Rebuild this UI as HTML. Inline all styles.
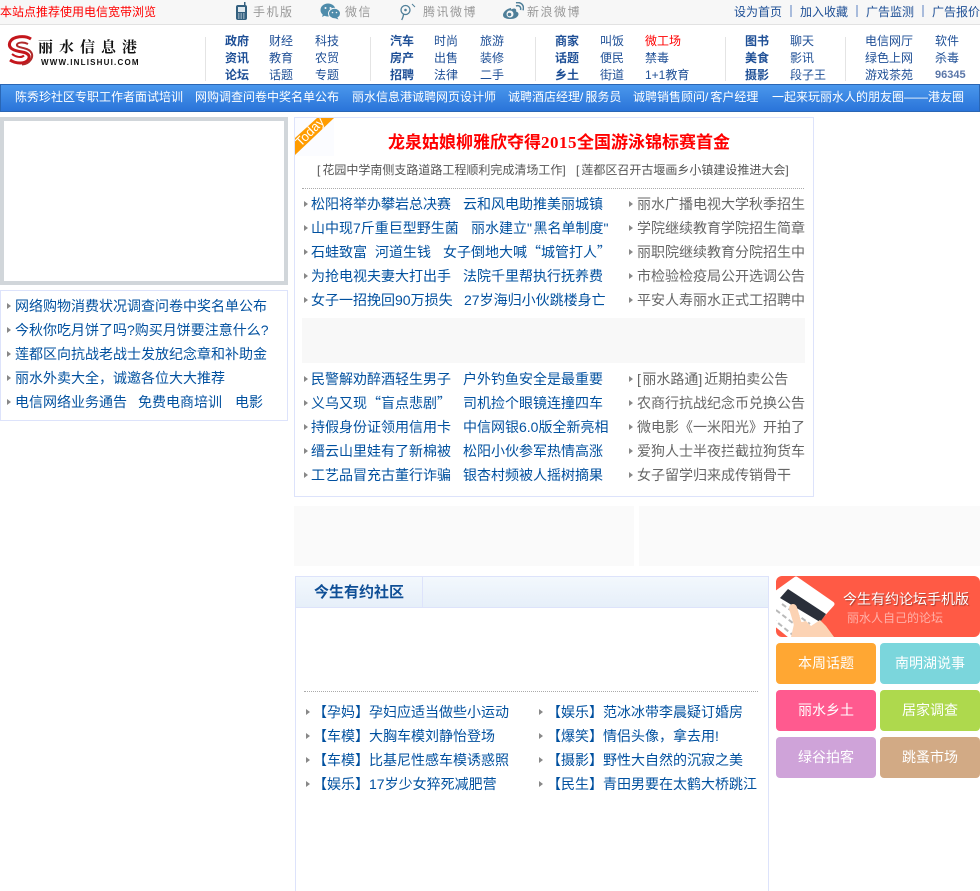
<!DOCTYPE html>
<html><head><meta charset="utf-8"><style>
html{margin:0;padding:0;background:#fff;width:980px;height:891px;overflow:hidden}
body{margin:0;padding:0;background:#fff;position:relative;width:980px;height:891px;overflow:hidden;font:12px/16px "WenQuanYi Zen Hei","Liberation Sans","Noto Sans CJK SC",sans-serif;color:#0b4f9e}
div,span,svg{position:absolute}
.t{white-space:nowrap}
.n,.b,.g,.k,.h,.w{position:absolute;white-space:nowrap}
.n{color:#1e4f96}
.k{color:#1e4f96;font-weight:bold}
.h{color:#999;font-size:12px;letter-spacing:1.5px;top:4px}
.w{color:#fff;top:89px}
.b{color:#00509f;font-size:14px;line-height:18px}
.g{color:#666;font-size:14px;line-height:18px}
.a{position:absolute;width:0;height:0;border-left:4px solid #888;border-top:3.5px solid transparent;border-bottom:3.5px solid transparent}
.s{background:#e4e4e4;width:1px;height:44px;top:37px}
.q{position:absolute;color:#fff;font-size:14px;line-height:41px;height:41px;width:100px;text-align:center;border-radius:4px;white-space:nowrap}
.p{top:4px;color:#1e4f96;position:absolute;white-space:nowrap}
.l{position:absolute;top:5px;width:2px;height:12px;background:#a9bcdc}
.c{position:static;font-family:"Noto Sans CJK SC",sans-serif}
.x{position:static;letter-spacing:2px}
.y{position:static;letter-spacing:1.5px}
</style></head><body>

<div style="left:0;top:0;width:980px;height:24px;background:#f7f7f7;border-bottom:1px solid #e2e2e2"></div>
<span class="t" style="left:0;top:4px;color:#f00">本站点推荐使用电信宽带浏览</span>

<svg style="left:235px;top:2px" width="13" height="19" viewBox="0 0 13 19"><rect x="1" y="3" width="11" height="15" rx="2" fill="#34607f"/><rect x="9" y="0" width="1.5" height="4" fill="#34607f"/><rect x="3" y="5" width="7" height="5" fill="#dfe8ee"/><path d="M3 12h7M3 14h7M3 16h7" stroke="#cfdde6" stroke-width="1" stroke-dasharray="1.5 1"/></svg>
<span class="h" style="left:253px">手机版</span>

<svg style="left:320px;top:3px" width="21" height="17" viewBox="0 0 21 17"><ellipse cx="8" cy="7" rx="7.5" ry="6.5" fill="#4f8cab"/><path d="M3 11l-1 3 4-2z" fill="#4f8cab"/><ellipse cx="14.5" cy="10.5" rx="6" ry="5.2" fill="#4f8cab" stroke="#f7f7f7"/><path d="M17 14l1.500 2.500-4-1.500z" fill="#4f8cab"/><circle cx="5.500" cy="5" r="1" fill="#f7f7f7"/><circle cx="10.500" cy="5" r="1" fill="#f7f7f7"/><circle cx="12.500" cy="9.500" r=".8" fill="#f7f7f7"/><circle cx="16.500" cy="9.500" r=".8" fill="#f7f7f7"/></svg>
<span class="h" style="left:345px">微信</span>

<svg style="left:399px;top:2px" width="18" height="19" viewBox="0 0 18 19"><circle cx="6.500" cy="8" r="4.500" fill="none" stroke="#4f7f99" stroke-width="1.300"/><circle cx="6.500" cy="8" r="1.300" fill="#4f7f99"/><path d="M4.500 12c0 2-.8 4-1.800 6" fill="none" stroke="#4f7f99" stroke-width="1.300"/><path d="M13 2l3 3" stroke="#4f7f99" stroke-width="1"/></svg>
<span class="h" style="left:423px">腾讯微博</span>

<svg style="left:502px;top:2px" width="22" height="18" viewBox="0 0 22 18"><path d="M9 6c-4 .5-8 4-8 7s3.500 4 7.500 4c5 0 8-2.500 8-5 0-1.500-1.500-2.300-2.500-2.500 .6-1.500 0-3-2-3-1 0-2 .5-3 1 .2-1 0-1.700 0-1.500z" fill="#4f7f99"/><circle cx="8" cy="12" r="3.500" fill="#f7f7f7"/><circle cx="7.500" cy="12.500" r="1.800" fill="#4f7f99"/><path d="M14 4c3-1.200 5.500 1 4.500 4M14 .8c5.500-1.200 8.500 3 7 7.500" fill="none" stroke="#4f7f99" stroke-width="1.500"/></svg>
<span class="h" style="left:527px">新浪微博</span>

<span class="p" style="left:734px">设为首页</span><div class="l" style="left:790px"></div>
<span class="p" style="left:800px">加入收藏</span><div class="l" style="left:856px"></div>
<span class="p" style="left:866px">广告监测</span><div class="l" style="left:922px"></div>
<span class="p" style="left:932px">广告报价</span>

<svg style="left:7px;top:35px" width="28" height="33" viewBox="0 0 28 33"><path d="M24 4C18 0 6 1 3 7c-3 7 6 9 12 10 6 1 9 4 6 8-3 4-12 4-18 0" fill="none" stroke="#c4161c" stroke-width="3"/><path d="M21 9c-4-2-10-2-11 .5-1 2.500 5 3 8 4 6 1.500 9 6 6 11-2 3-5 5-9 5" fill="none" stroke="#b02a2a" stroke-width="2"/><path d="M5 19c3 2.500 9 4.500 12 1.500" fill="none" stroke="#c4161c" stroke-width="2"/></svg>
<span class="t" style="left:38px;top:37px;font:bold 15px/20px 'Noto Serif CJK SC',serif;letter-spacing:6px;color:#111">丽水信息港</span>
<span class="t" style="left:41px;top:58px;font:bold 8px/10px 'Liberation Sans',sans-serif;letter-spacing:1.2px;color:#111">WWW.INLISHUI.COM</span>

<div class="s" style="left:205px"></div><div class="s" style="left:370px"></div><div class="s" style="left:535px"></div><div class="s" style="left:725px"></div><div class="s" style="left:845px"></div>

<span class="k" style="left:225px;top:33px">政府</span><span class="n" style="left:269px;top:33px">财经</span><span class="n" style="left:315px;top:33px">科技</span>
<span class="k" style="left:225px;top:50px">资讯</span><span class="n" style="left:269px;top:50px">教育</span><span class="n" style="left:315px;top:50px">农贸</span>
<span class="k" style="left:225px;top:67px">论坛</span><span class="n" style="left:269px;top:67px">话题</span><span class="n" style="left:315px;top:67px">专题</span>

<span class="k" style="left:390px;top:33px">汽车</span><span class="n" style="left:434px;top:33px">时尚</span><span class="n" style="left:480px;top:33px">旅游</span>
<span class="k" style="left:390px;top:50px">房产</span><span class="n" style="left:434px;top:50px">出售</span><span class="n" style="left:480px;top:50px">装修</span>
<span class="k" style="left:390px;top:67px">招聘</span><span class="n" style="left:434px;top:67px">法律</span><span class="n" style="left:480px;top:67px">二手</span>

<span class="k" style="left:555px;top:33px">商家</span><span class="n" style="left:600px;top:33px">叫饭</span><span class="n" style="left:645px;top:33px;color:#f00">微工场</span>
<span class="k" style="left:555px;top:50px">话题</span><span class="n" style="left:600px;top:50px">便民</span><span class="n" style="left:645px;top:50px">禁毒</span>
<span class="k" style="left:555px;top:67px">乡土</span><span class="n" style="left:600px;top:67px">街道</span><span class="n" style="left:645px;top:67px">1+1教育</span>

<span class="k" style="left:745px;top:33px">图书</span><span class="n" style="left:790px;top:33px">聊天</span>
<span class="k" style="left:745px;top:50px">美食</span><span class="n" style="left:790px;top:50px">影讯</span>
<span class="k" style="left:745px;top:67px">摄影</span><span class="n" style="left:790px;top:67px">段子王</span>

<span class="n" style="left:865px;top:33px">电信网厅</span><span class="n" style="left:935px;top:33px">软件</span>
<span class="n" style="left:865px;top:50px">绿色上网</span><span class="n" style="left:935px;top:50px">杀毒</span>
<span class="n" style="left:865px;top:67px">游戏茶苑</span><span class="n" style="left:935px;top:67px;color:#5a76a8;font-weight:bold;font-size:11px">96345</span>

<div style="left:0;top:84px;width:978px;height:26px;background:linear-gradient(#4a97ec,#2a74d9);border:1px solid #2a66b4"></div>
<span class="w" style="left:15px">陈秀珍社区专职工作者面试培训</span>
<span class="w" style="left:195px">网购调查问卷中奖名单公布</span>
<span class="w" style="left:352px">丽水信息港诚聘网页设计师</span>
<span class="w" style="left:508px">诚聘酒店经理<span class="x">/</span>服务员</span>
<span class="w" style="left:633px">诚聘销售顾问<span class="x">/</span>客户经理</span>
<span class="w" style="left:772px">一起来玩丽水人的朋友圈——港友圈</span>

<div style="left:0;top:117px;width:280px;height:160px;border:4px solid #d1d6da"></div>
<div style="left:0;top:290px;width:286px;height:129px;border:1px solid #dde3fb"></div>
<i class="a" style="left:7px;top:303px"></i><span class="b" style="left:15px;top:297px">网络购物消费状况调查问卷中奖名单公布</span>
<i class="a" style="left:7px;top:327px"></i><span class="b" style="left:15px;top:321px">今秋你吃月饼了吗?购买月饼要注意什么?</span>
<i class="a" style="left:7px;top:351px"></i><span class="b" style="left:15px;top:345px">莲都区向抗战老战士发放纪念章和补助金</span>
<i class="a" style="left:7px;top:375px"></i><span class="b" style="left:15px;top:369px">丽水外卖大全，诚邀各位大大推荐</span>
<i class="a" style="left:7px;top:399px"></i><span class="b" style="left:15px;top:393px">电信网络业务通告</span><span class="b" style="left:138px;top:393px">免费电商培训</span><span class="b" style="left:235px;top:393px">电影</span>

<div style="left:294px;top:117px;width:518px;height:378px;border:1px solid #dde3fb"></div>
<svg style="left:295px;top:118px" width="39" height="38"><rect width="39" height="38" fill="#fbfcff"/><polygon points="22,0 39,0 0,37 0,20" fill="#ff9c00"/><text x="15" y="18" transform="rotate(-45 15 14)" fill="#fff" font-size="13" font-family="Liberation Sans" text-anchor="middle">Today</text></svg>
<span class="t" style="left:388px;top:131px;font:bold 17px/20px 'WenQuanYi Zen Hei','Noto Sans CJK SC',sans-serif;color:#f00">龙泉姑娘柳雅欣夺得<span style="position:static;font-family:'Liberation Serif';letter-spacing:.5px">2015</span>全国游泳锦标赛首金</span>
<span class="t" style="left:317px;top:162px;color:#555"><span class="x">[</span>花园中学南侧支路道路工程顺利完成清场工作]</span>
<span class="t" style="left:576px;top:162px;color:#555"><span class="x">[</span>莲都区召开古堰画乡小镇建设推进大会]</span>
<div style="left:302px;top:188px;width:502px;border-top:1px dotted #aaa"></div>

<i class="a" style="left:304px;top:201px"></i><span class="b" style="left:311px;top:195px">松阳将举办攀岩总决赛</span><span class="b" style="left:463px;top:195px">云和风电助推美丽城镇</span>
<i class="a" style="left:304px;top:225px"></i><span class="b" style="left:311px;top:219px">山中现7斤重巨型野生菌</span><span class="b" style="left:471px;top:219px">丽水建立<span class="y">"</span>黑名单制度<span class="y">"</span></span>
<i class="a" style="left:304px;top:249px"></i><span class="b" style="left:311px;top:243px">石蛙致富</span><span class="b" style="left:375px;top:243px">河道生钱</span><span class="b" style="left:443px;top:243px">女子倒地大喊<span class="c">“</span>城管打人<span class="c">”</span></span>
<i class="a" style="left:304px;top:273px"></i><span class="b" style="left:311px;top:267px">为抢电视夫妻大打出手</span><span class="b" style="left:463px;top:267px">法院千里帮执行抚养费</span>
<i class="a" style="left:304px;top:297px"></i><span class="b" style="left:311px;top:291px">女子一招挽回90万损失</span><span class="b" style="left:464px;top:291px">27岁海归小伙跳楼身亡</span>

<i class="a" style="left:629px;top:201px"></i><span class="g" style="left:637px;top:195px">丽水广播电视大学秋季招生</span>
<i class="a" style="left:629px;top:225px"></i><span class="g" style="left:637px;top:219px">学院继续教育学院招生简章</span>
<i class="a" style="left:629px;top:249px"></i><span class="g" style="left:637px;top:243px">丽职院继续教育分院招生中</span>
<i class="a" style="left:629px;top:273px"></i><span class="g" style="left:637px;top:267px">市检验检疫局公开选调公告</span>
<i class="a" style="left:629px;top:297px"></i><span class="g" style="left:637px;top:291px">平安人寿丽水正式工招聘中</span>

<div style="left:302px;top:318px;width:503px;height:45px;background:#f8f8f8"></div>

<i class="a" style="left:304px;top:376px"></i><span class="b" style="left:311px;top:370px">民警解劝醉酒轻生男子</span><span class="b" style="left:463px;top:370px">户外钓鱼安全是最重要</span>
<i class="a" style="left:304px;top:400px"></i><span class="b" style="left:311px;top:394px">义乌又现<span class="c">“</span>盲点悲剧<span class="c">”</span></span><span class="b" style="left:463px;top:394px">司机捡个眼镜连撞四车</span>
<i class="a" style="left:304px;top:424px"></i><span class="b" style="left:311px;top:418px">持假身份证领用信用卡</span><span class="b" style="left:463px;top:418px">中信网银6.0版全新亮相</span>
<i class="a" style="left:304px;top:448px"></i><span class="b" style="left:311px;top:442px">缙云山里娃有了新棉被</span><span class="b" style="left:463px;top:442px">松阳小伙参军热情高涨</span>
<i class="a" style="left:304px;top:472px"></i><span class="b" style="left:311px;top:466px">工艺品冒充古董行诈骗</span><span class="b" style="left:463px;top:466px">银杏村频被人摇树摘果</span>

<i class="a" style="left:629px;top:376px"></i><span class="g" style="left:637px;top:370px"><span class="y">[</span>丽水路通<span class="x">]</span>近期拍卖公告</span>
<i class="a" style="left:629px;top:400px"></i><span class="g" style="left:637px;top:394px">农商行抗战纪念币兑换公告</span>
<i class="a" style="left:629px;top:424px"></i><span class="g" style="left:637px;top:418px">微电影《一米阳光》开拍了</span>
<i class="a" style="left:629px;top:448px"></i><span class="g" style="left:637px;top:442px">爱狗人士半夜拦截拉狗货车</span>
<i class="a" style="left:629px;top:472px"></i><span class="g" style="left:637px;top:466px">女子留学归来成传销骨干</span>

<div style="left:294px;top:506px;width:340px;height:60px;background:#fafafa"></div>
<div style="left:639px;top:506px;width:341px;height:60px;background:#fafafa"></div>

<div style="left:295px;top:576px;width:472px;height:314px;border:1px solid #dde3fb;border-bottom:none"></div>
<div style="left:296px;top:577px;width:472px;height:30px;background:linear-gradient(#f3f8fd,#e6eff9);border-bottom:1px solid #dde3fb"></div>
<div style="left:422px;top:577px;width:1px;height:30px;background:#dde3fb"></div>
<span class="t" style="left:314px;top:583px;font:bold 15px/18px 'WenQuanYi Zen Hei','Noto Sans CJK SC',sans-serif;color:#0f4f96">今生有约社区</span>
<div style="left:304px;top:691px;width:454px;border-top:1px dotted #aaa"></div>

<i class="a" style="left:306px;top:709px"></i><span class="b" style="left:313px;top:703px">【孕妈】孕妇应适当做些小运动</span>
<i class="a" style="left:306px;top:733px"></i><span class="b" style="left:313px;top:727px">【车模】大胸车模刘静怡登场</span>
<i class="a" style="left:306px;top:757px"></i><span class="b" style="left:313px;top:751px">【车模】比基尼性感车模诱惑照</span>
<i class="a" style="left:306px;top:781px"></i><span class="b" style="left:313px;top:775px">【娱乐】17岁少女猝死减肥营</span>
<i class="a" style="left:539px;top:709px"></i><span class="b" style="left:547px;top:703px">【娱乐】范冰冰带李晨疑订婚房</span>
<i class="a" style="left:539px;top:733px"></i><span class="b" style="left:547px;top:727px">【爆笑】情侣头像，拿去用!</span>
<i class="a" style="left:539px;top:757px"></i><span class="b" style="left:547px;top:751px">【摄影】野性大自然的沉寂之美</span>
<i class="a" style="left:539px;top:781px"></i><span class="b" style="left:547px;top:775px">【民生】青田男要在太鹤大桥跳江</span>

<div style="left:776px;top:576px;width:204px;height:61px;background:#ff5a45;border-radius:6px;overflow:hidden">
<svg style="left:0;top:0" width="70" height="61" viewBox="0 0 70 61">
<polygon points="20,3 56,28 22,66 -20,32" fill="#fff" stroke="#fff" stroke-width="5" stroke-linejoin="round"/>
<polygon points="12,13 50,38 44,46 4,22" fill="#2a2f3a"/>
<path d="M6 28l28 20M0 34l26 20M-4 42l22 18" stroke="#b9b9b9" stroke-width="2" stroke-dasharray="5 3"/>
<path d="M17 32l6 20" stroke="#fcd3b4" stroke-width="8" stroke-linecap="round"/>
<path d="M15 61L18 48 30 45 35 50 44 44 50 50 58 61Z" fill="#fcd3b4"/>
</svg>
</div>
<span class="t" style="left:843px;top:591px;color:#fff;font-size:14px;text-shadow:1px 1px 1px rgba(110,40,30,.6)">今生有约论坛手机版</span>
<span class="t" style="left:847px;top:610px;color:#ffb0a8;font-size:12px">丽水人自己的论坛</span>

<div class="q" style="left:776px;top:643px;background:#ffa733">本周话题</div>
<div class="q" style="left:880px;top:643px;background:#7bd6dc">南明湖说事</div>
<div class="q" style="left:776px;top:690px;background:#ff5a8f">丽水乡土</div>
<div class="q" style="left:880px;top:690px;background:#aed94d">居家调查</div>
<div class="q" style="left:776px;top:737px;background:#cfa3d9">绿谷拍客</div>
<div class="q" style="left:880px;top:737px;background:#d2aa85">跳蚤市场</div>
</body></html>
